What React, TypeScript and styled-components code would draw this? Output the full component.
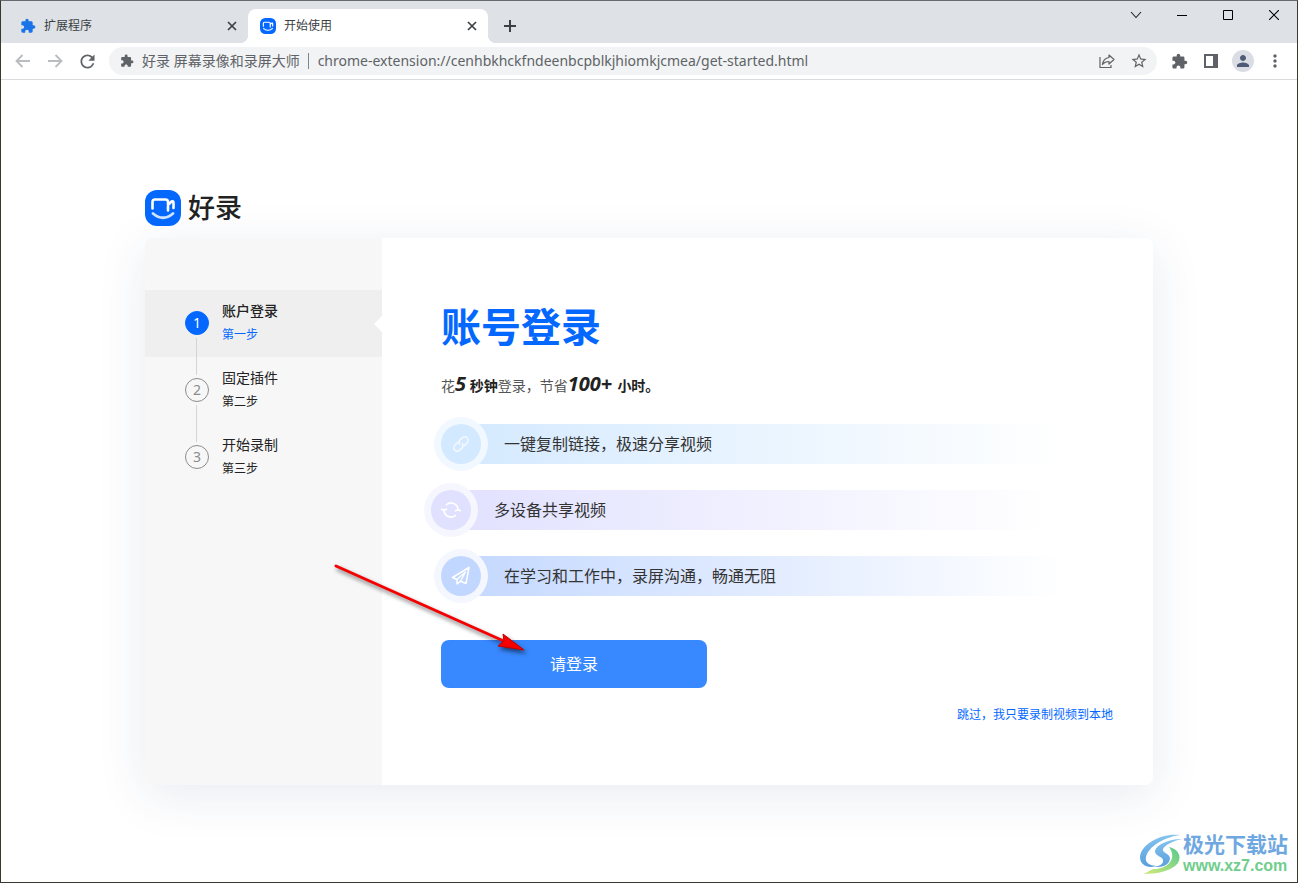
import React from "react";
import styled, { createGlobalStyle, css } from "styled-components";
import { MdExtension, MdRefresh, MdPerson, MdMoreVert, MdStarOutline } from "react-icons/md";

const GlobalStyle = createGlobalStyle`
  *, *::before, *::after { box-sizing: border-box; }
  body {
    margin: 0;
    background: #fff;
    font-family: "Noto Sans", "Noto Sans CJK SC", sans-serif;
    color: #222;
  }
  button { font: inherit; border: 0; padding: 0; background: none; cursor: pointer; }
  svg { display: block; flex: none; }
`;

const BrowserWindow = styled.div`
  position: relative;
  display: flex;
  flex-direction: column;
  min-height: 100vh;
  border: 1px solid #38392f;
  border-top-color: #6a6b6e;
  background: #fff;
  overflow: hidden;
`;

/* ---------- tab strip ---------- */

const TabStrip = styled.header`
  display: flex;
  height: 42px;
  padding-left: 7px;
  background: #dee1e6;
`;

const Tab = styled.div<{ $active?: boolean }>`
  position: relative;
  display: flex;
  align-items: center;
  width: 240px;
  height: 34px;
  margin-top: 8px;
  padding: 0 8px 0 12px;
  border-radius: 8px 8px 0 0;
  font-size: 12px;
  line-height: 16px;
  color: #3c4043;
  ${(p) =>
    p.$active &&
    css`
      background: #fff;
      &::before,
      &::after {
        content: "";
        position: absolute;
        bottom: 0;
        width: 8px;
        height: 8px;
      }
      &::before {
        left: -8px;
        background: radial-gradient(circle at 0 0, transparent 8px, #fff 8px);
      }
      &::after {
        right: -8px;
        background: radial-gradient(circle at 100% 0, transparent 8px, #fff 8px);
      }
    `}
`;

const TabTitle = styled.span`
  flex: 1;
  margin-left: 8px;
`;

const IconButton = styled.button<{ $w: number; $h: number; $color?: string }>`
  display: flex;
  flex: none;
  align-items: center;
  justify-content: center;
  width: ${(p) => p.$w}px;
  height: ${(p) => p.$h}px;
  color: ${(p) => p.$color ?? "#5f6368"};
`;

const NewTab = styled.div`
  margin: 11px 0 0 8px;
`;

const WindowControls = styled.div`
  display: flex;
  margin-left: auto;
`;

/* ---------- toolbar ---------- */

const Toolbar = styled.div`
  display: flex;
  align-items: center;
  height: 37px;
  padding: 0 6px;
  border-bottom: 1px solid #d9dbde;
  background: #fff;
`;

const Omnibox = styled.div`
  display: flex;
  flex: 1;
  align-items: center;
  height: 28px;
  margin: 0 6px;
  padding: 0 2px 0 11px;
  border-radius: 14px;
  background: #f1f3f4;
  font-size: 14px;
  line-height: 20px;
  color: #5f6368;
`;

const SiteName = styled.label`
  margin-left: 8px;
  padding-right: 8px;
  border-right: 1px solid #80868b;
  line-height: 16px;
  white-space: nowrap;
`;

const Address = styled.input`
  flex: 1;
  min-width: 0;
  margin-left: 9px;
  padding: 0;
  border: 0;
  outline: 0;
  background: none;
  font: inherit;
  color: inherit;
`;

const Avatar = styled.span`
  display: flex;
  align-items: center;
  justify-content: center;
  width: 22px;
  height: 22px;
  border-radius: 50%;
  background: #dadde3;
  color: #4f5b76;
`;

/* ---------- page ---------- */

const Page = styled.main`
  flex: 1;
  width: 100%;
  max-width: 1008px;
  margin: 0 auto;
  padding: 110px 0 97px;
`;

const Brand = styled.h2`
  display: flex;
  align-items: center;
  gap: 7px;
  height: 36px;
  margin: 0 0 12px;
  font-size: 27px;
  font-weight: 500;
  line-height: 36px;
  color: #222;
`;

const Card = styled.div`
  display: flex;
  border-radius: 8px;
  background: #fff;
  box-shadow: 0 10px 50px rgba(28, 58, 120, 0.1);
`;

const Sidebar = styled.ol`
  flex: none;
  width: 237px;
  margin: 0;
  padding: 52px 0;
  list-style: none;
  border-radius: 8px 0 0 8px;
  background: #f7f7f7;
`;

const Step = styled.li<{ $active?: boolean }>`
  position: relative;
  display: flex;
  align-items: center;
  gap: 13px;
  height: 67px;
  padding: 0 0 1px 40px;
  font-size: 14px;
  line-height: 20px;
  color: #222;
  ${(p) =>
    p.$active &&
    css`
      background: #efefef;
      font-weight: 500;
      &::after {
        content: "";
        position: absolute;
        right: 0;
        top: 26px;
        border: 8px solid transparent;
        border-left: 0;
        border-right-color: #fff;
      }
    `}
  &:not(:last-child)::before {
    content: "";
    position: absolute;
    z-index: 1;
    left: 51px;
    top: 48px;
    width: 1px;
    height: 37px;
    background: #d4d4d4;
  }
`;

const StepNumber = styled.span<{ $active?: boolean }>`
  display: flex;
  align-items: center;
  justify-content: center;
  width: 24px;
  height: 24px;
  border: 1px solid ${(p) => (p.$active ? "#0468ff" : "#8c8c8c")};
  border-radius: 50%;
  background: ${(p) => (p.$active ? "#0468ff" : "transparent")};
  color: ${(p) => (p.$active ? "#fff" : "#8c8c8c")};
  font-size: 14px;
  font-weight: 400;
`;

const StepText = styled.div`
  display: grid;
  gap: 4px;
`;

const StepCaption = styled.span<{ $active?: boolean }>`
  font-size: 12px;
  font-weight: 400;
  color: ${(p) => (p.$active ? "#0468ff" : "#222")};
`;

const Content = styled.section`
  display: flex;
  flex: 1;
  flex-direction: column;
  align-items: flex-start;
  padding: 59px 40px 60px 59px;
`;

const Title = styled.h1`
  margin: 0;
  font-size: 40px;
  font-weight: 700;
  line-height: 60px;
  color: #0468ff;
`;

const Lead = styled.p`
  margin: 13px 0 24px;
  font-size: 14px;
  line-height: 28px;
  color: #555;
  b { color: #222; }
  em { font-size: 20px; }
`;

const Features = styled.ul`
  display: grid;
  gap: 26px;
  width: 620px;
  max-width: 100%;
  margin: 0;
  padding: 0;
  list-style: none;
`;

const Feature = styled.li<{ $tint: string; $shifted?: boolean }>`
  display: flex;
  align-items: center;
  gap: 23px;
  height: 40px;
  margin-left: ${(p) => (p.$shifted ? "-10px" : "0")};
  margin-right: ${(p) => (p.$shifted ? "10px" : "0")};
  border-radius: 20px 0 0 20px;
  background: linear-gradient(90deg, ${(p) => p.$tint}, #fff);
  font-size: 16px;
  line-height: 24px;
  color: #333;
`;

const FeatureIcon = styled.span<{ $tint: string; $ring: string }>`
  display: flex;
  flex: none;
  align-items: center;
  justify-content: center;
  width: 40px;
  height: 40px;
  border-radius: 50%;
  background: ${(p) => p.$tint};
  box-shadow: 0 0 0 7px ${(p) => p.$ring};
`;

const LoginButton = styled.button`
  width: 266px;
  height: 48px;
  margin-top: 44px;
  border-radius: 8px;
  background: #3888ff;
  color: #fff;
  font-size: 16px;
  line-height: 24px;
`;

const SkipLink = styled.a`
  align-self: flex-end;
  margin-top: 17px;
  font-size: 12px;
  line-height: 20px;
  color: #0468ff;
  text-decoration: none;
`;

/* ---------- overlays ---------- */

const Pointer = styled.svg`
  position: absolute;
  left: 325px;
  top: 555px;
  pointer-events: none;
  filter: drop-shadow(2px 3px 2px rgba(0, 0, 0, 0.55));
`;

const Watermark = styled.div`
  position: absolute;
  right: 9px;
  bottom: 6px;
  display: flex;
  align-items: center;
`;

const WatermarkText = styled.div`
  display: grid;
  font-size: 21px;
  font-weight: 700;
  line-height: 24px;
  color: #6fa8e0;
`;

const WatermarkUrl = styled.span`
  font-family: "Liberation Sans", sans-serif;
  font-size: 16px;
  line-height: 20px;
  color: #6fce8c;
`;

/* ---------- drawings ---------- */

const Logo = ({ size }: { size: number }) => (
  <svg width={size} height={size} viewBox="0 0 36 36" fill="none" aria-hidden="true">
    <rect width="36" height="36" rx="12" fill="#0468ff" />
    <path
      d="M7.500 18.500V12Q7.500 9.500 10 9.500H20.500Q23 9.500 23 12V20.500M23 15L26.500 11.500Q28.500 10.500 28.500 13V18"
      stroke="#fff"
      strokeWidth="2.600"
      strokeLinecap="round"
      strokeLinejoin="round"
    />
    <path d="M8 23.500Q18 32 28 23.500" stroke="#cfe3ff" strokeWidth="2.800" strokeLinecap="round" />
  </svg>
);

const TabClose = () => (
  <svg width="10" height="10" viewBox="0 0 10 10" stroke="#3c4043" strokeWidth="1.700">
    <path d="M1 1L9 9M9 1L1 9" />
  </svg>
);

const NavArrow = ({ flip }: { flip?: boolean }) => (
  <svg width="16" height="16" viewBox="0 0 16 16" fill="none" stroke="#babcbe" strokeWidth="1.800">
    <path d={flip ? "M1 8H14M8.500 2L14.500 8L8.500 14" : "M15 8H2M7.500 2L1.500 8L7.500 14"} />
  </svg>
);

const LinkIcon = () => (
  <svg width="18" height="18" viewBox="0 0 18 18" fill="none" stroke="#f2f8ff" strokeWidth="1.600" strokeLinecap="round">
    <g transform="rotate(-45 9 9)">
      <path d="M7.500 5.500H3.800A3.500 3.500 0 0 0 3.800 12.500H7A3.500 3.500 0 0 0 10.300 9.800" />
      <path d="M10.500 12.500H14.200A3.500 3.500 0 0 0 14.200 5.500H11A3.500 3.500 0 0 0 7.700 8.200" />
    </g>
  </svg>
);

const SyncIcon = () => (
  <svg width="20" height="18" viewBox="0 0 20 18" fill="none" stroke="#fff" strokeWidth="1.700" strokeLinecap="round" strokeLinejoin="round">
    <path d="M5.500 3.700A7 7 0 0 1 17 9.500M14.600 9.800L17 8.600L19.200 9.800" />
    <path d="M14.500 14.300A7 7 0 0 1 3 8.500M5.400 8.200L3 9.400L.8 8.200" />
  </svg>
);

const PlaneIcon = () => (
  <svg width="20" height="20" viewBox="0 0 20 20" fill="none" stroke="#fff" strokeWidth="1.500" strokeLinejoin="round" strokeLinecap="round">
    <path d="M18 1.500L1.500 11.500L6 13.500V18L9.500 15.200L15 17.500L18 1.500Z" />
    <path d="M6 13.500L14.500 6L9.500 15.200" strokeWidth="1.300" />
  </svg>
);

const WatermarkLogo = () => (
  <svg width="43" height="42" viewBox="0 0 43 42" aria-hidden="true">
    <defs>
      <linearGradient id="swoosh" x1="0" y1="0" x2="0" y2="1">
        <stop offset="0" stopColor="#83c4ee" />
        <stop offset="1" stopColor="#5a9fdd" />
      </linearGradient>
      <linearGradient id="leaf" x1="1" y1="0" x2="0" y2="1">
        <stop offset="0" stopColor="#55c98d" />
        <stop offset="1" stopColor="#d4ea7a" />
      </linearGradient>
    </defs>
    <path
      d="M40 2C21 0 1 11 0 24C0 32 8 36 16 33C8 32 5 29 6 24C8 14 24 4 40 2Z"
      fill="url(#swoosh)"
    />
    <path
      d="M42 6C29 6 15 12 15 19C16 24 24 23 23 29C22 32 18 34 13 33C21 36 30 32 30 25C29 20 22 20 23 16C25 12 33 8 42 6Z"
      fill="url(#swoosh)"
    />
    <path
      d="M29 14C38 16 42 23 38 30C32 38 17 41 3 41C9 39 9 37 14 36C27 36 38 26 29 14Z"
      fill="url(#leaf)"
    />
  </svg>
);

/* ---------- data ---------- */

const steps = [
  { title: "账户登录", caption: "第一步" },
  { title: "固定插件", caption: "第二步" },
  { title: "开始录制", caption: "第三步" },
];

const features = [
  { text: "一键复制链接，极速分享视频", tint: "#d3e9ff", ring: "#f2f8ff", icon: <LinkIcon /> },
  { text: "多设备共享视频", tint: "#e0e0ff", ring: "#f6f6ff", icon: <SyncIcon />, shifted: true },
  { text: "在学习和工作中，录屏沟通，畅通无阻", tint: "#c2d7ff", ring: "#f5f7ff", icon: <PlaneIcon /> },
];

export default function App() {
  return (
    <BrowserWindow>
      <GlobalStyle />
      <TabStrip>
        <Tab>
          <MdExtension size={16} color="#1a73e8" />
          <TabTitle>扩展程序</TabTitle>
          <IconButton $w={16} $h={16} aria-label="关闭">
            <TabClose />
          </IconButton>
        </Tab>
        <Tab $active>
          <Logo size={16} />
          <TabTitle>开始使用</TabTitle>
          <IconButton $w={16} $h={16} aria-label="关闭">
            <TabClose />
          </IconButton>
        </Tab>
        <NewTab>
          <IconButton $w={28} $h={28} aria-label="新标签页">
            <svg width="12" height="12" viewBox="0 0 12 12" stroke="#3c4043" strokeWidth="2">
              <path d="M6 0V12M0 6H12" />
            </svg>
          </IconButton>
        </NewTab>
        <WindowControls>
          <IconButton $w={46} $h={28} aria-label="搜索标签页">
            <svg width="12" height="8" viewBox="0 0 12 8" fill="none" stroke="#222" strokeWidth="1.100">
              <path d="M1 1L6 6.500L11 1" />
            </svg>
          </IconButton>
          <IconButton $w={46} $h={28} aria-label="最小化">
            <svg width="10" height="10" viewBox="0 0 10 10">
              <path d="M0 5H10V6H0Z" fill="#000" />
            </svg>
          </IconButton>
          <IconButton $w={46} $h={28} aria-label="最大化">
            <svg width="10" height="10" viewBox="0 0 10 10" fill="none" stroke="#000">
              <path d="M.5 .5H9.500V9.500H.5Z" />
            </svg>
          </IconButton>
          <IconButton $w={46} $h={28} aria-label="关闭窗口">
            <svg width="10" height="10" viewBox="0 0 10 10" stroke="#000" strokeWidth="1.100">
              <path d="M0 0L10 10M10 0L0 10" />
            </svg>
          </IconButton>
        </WindowControls>
      </TabStrip>

      <Toolbar>
        <IconButton $w={32} $h={28} aria-label="后退">
          <NavArrow />
        </IconButton>
        <IconButton $w={32} $h={28} aria-label="前进">
          <NavArrow flip />
        </IconButton>
        <IconButton $w={32} $h={28} aria-label="重新加载">
          <MdRefresh size={21} />
        </IconButton>
        <Omnibox>
          <MdExtension size={14} />
          <SiteName htmlFor="address">好录 屏幕录像和录屏大师</SiteName>
          <Address
            id="address"
            defaultValue="chrome-extension://cenhbkhckfndeenbcpblkjhiomkjcmea/get-started.html"
          />
          <IconButton $w={32} $h={28} aria-label="分享">
            <svg width="16" height="16" viewBox="0 0 16 16" fill="none" stroke="#5f6368" strokeWidth="1.200">
              <path d="M1 4V14.500H12V12" />
              <path d="M10 2L15 6.500L10 11V8.500C7 8.500 5 9.500 3.500 11.500C4 7.500 6 5 10 4.500Z" strokeLinejoin="round" />
            </svg>
          </IconButton>
          <IconButton $w={32} $h={28} aria-label="收藏">
            <MdStarOutline size={18} />
          </IconButton>
        </Omnibox>
        <IconButton $w={32} $h={28} aria-label="扩展程序">
          <MdExtension size={17} />
        </IconButton>
        <IconButton $w={32} $h={28} aria-label="侧边栏">
          <svg width="14" height="14" viewBox="0 0 14 14" fill="#5f6368">
            <path fillRule="evenodd" d="M0 0H14V14H0ZM2 2V12H9V2Z" />
          </svg>
        </IconButton>
        <IconButton $w={32} $h={28} aria-label="用户">
          <Avatar>
            <MdPerson size={18} />
          </Avatar>
        </IconButton>
        <IconButton $w={32} $h={28} aria-label="菜单">
          <MdMoreVert size={20} />
        </IconButton>
      </Toolbar>

      <Page>
        <Brand>
          <Logo size={36} />
          好录
        </Brand>
        <Card>
          <Sidebar>
            {steps.map((s, i) => (
              <Step key={s.title} $active={i === 0}>
                <StepNumber $active={i === 0}>{i + 1}</StepNumber>
                <StepText>
                  <span>{s.title}</span>
                  <StepCaption $active={i === 0}>{s.caption}</StepCaption>
                </StepText>
              </Step>
            ))}
          </Sidebar>
          <Content>
            <Title>账号登录</Title>
            <Lead>
              花
              <b>
                <em>5</em> 秒钟
              </b>
              登录，节省
              <b>
                <em>100+ </em>小时。
              </b>
            </Lead>
            <Features>
              {features.map((f) => (
                <Feature key={f.text} $tint={f.tint} $shifted={f.shifted}>
                  <FeatureIcon $tint={f.tint} $ring={f.ring}>
                    {f.icon}
                  </FeatureIcon>
                  {f.text}
                </Feature>
              ))}
            </Features>
            <LoginButton>请登录</LoginButton>
            <SkipLink href="#skip">跳过，我只要录制视频到本地</SkipLink>
          </Content>
        </Card>
      </Page>

      <Pointer width="210" height="110" viewBox="0 0 210 110" aria-hidden="true">
        <path d="M10 10L180 86" stroke="#f50000" strokeWidth="3" strokeLinecap="round" />
        <path d="M198 94L172 90L178 85L177 78Z" fill="#f50000" stroke="#c00000" strokeWidth="1" />
      </Pointer>

      <Watermark>
        <WatermarkLogo />
        <WatermarkText>
          极光下载站
          <WatermarkUrl>www.xz7.com</WatermarkUrl>
        </WatermarkText>
      </Watermark>
    </BrowserWindow>
  );
}
